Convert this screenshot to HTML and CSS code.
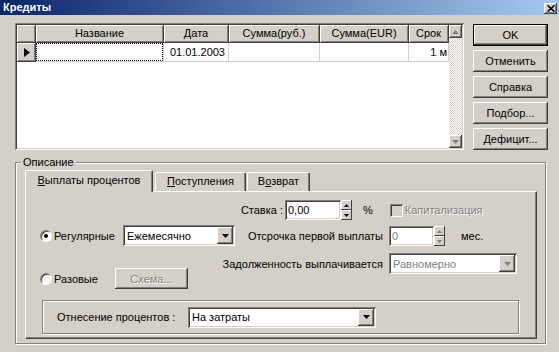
FILE: index.html
```html
<!DOCTYPE html>
<html lang="ru">
<head>
	<meta charset="UTF-8">
	<title>Кредиты</title>
	<link rel="stylesheet" href="styles.css">
</head>
<body>
	<div class="window">
		<div class="titlebar">
			<span class="title">Кредиты</span>
			<span class="close"><svg width="8" height="7" viewBox="0 0 8 7"><path d="M0.6 0.5L7.4 6.5M7.4 0.5L0.6 6.5" stroke="#000" stroke-width="1.6"/></svg></span>
		</div>
		<div class="client">
			<div class="top">
				<div class="grid">
					<div class="grid-body">
						<div class="row head">
							<div class="cell ind"></div>
							<div class="cell c-name">Название</div>
							<div class="cell c-date">Дата</div>
							<div class="cell c-rub">Сумма(руб.)</div>
							<div class="cell c-eur">Сумма(EUR)</div>
							<div class="cell c-term">Срок</div>
						</div>
						<div class="row data">
							<div class="cell ind"><svg width="6" height="9" viewBox="0 0 6 9"><polygon points="0,0 6,4.5 0,9"/></svg></div>
							<div class="cell c-name"><span class="focus"></span></div>
							<div class="cell c-date num">01.01.2003</div>
							<div class="cell c-rub"></div>
							<div class="cell c-eur"></div>
							<div class="cell c-term num">1 м</div>
						</div>
					</div>
					<div class="vscroll">
						<div class="sbtn"><svg width="7" height="4" viewBox="0 0 7 4"><polygon points="0,4 7,4 3.5,0" fill="#808080"/></svg></div>
						<div class="track"></div>
						<div class="sbtn"><svg width="7" height="4" viewBox="0 0 7 4"><polygon points="0,0 7,0 3.5,4" fill="#808080"/></svg></div>
					</div>
				</div>
				<div class="buttons">
					<button class="btn default">OK</button>
					<button class="btn">Отменить</button>
					<button class="btn">Справка</button>
					<button class="btn">Подбор...</button>
					<button class="btn">Дефицит...</button>
				</div>
			</div>

			<div class="group outer">
				<div class="caption">Описание</div>
				<div class="tabs">
					<div class="tab active t1"><u>В</u>ыплаты процентов</div>
					<div class="tab t2"><u>П</u>оступления</div>
					<div class="tab t3">В<u>о</u>зврат</div>
				</div>
				<div class="page">
					<div class="page-top">
						<div class="left">
							<div class="frow">
								<label class="opt w83"><span class="radio checked"></span>Регулярные</label>
								<div class="combo w112">
									<span class="combo-text">Ежемесячно</span>
									<span class="drop"><svg width="7" height="4" viewBox="0 0 7 4"><polygon points="0,0 7,0 3.5,4"/></svg></span>
								</div>
							</div>
							<div class="frow r-once">
								<label class="opt w75"><span class="radio"></span>Разовые</label>
								<button class="btn off scheme">Схема...</button>
							</div>
						</div>
						<div class="right">
							<div class="frow r-rate">
								<span class="lbl w63">Ставка :</span>
								<div class="edit rate">0,00</div>
								<div class="spin">
									<span class="spin-btn"><svg width="5" height="3" viewBox="0 0 5 3"><polygon points="0,3 5,3 2.5,0"/></svg></span>
									<span class="spin-btn"><svg width="5" height="3" viewBox="0 0 5 3"><polygon points="0,0 5,0 2.5,3"/></svg></span>
								</div>
								<span class="pct">%</span>
								<label class="chk-label off"><span class="chk"></span>Капитализация</label>
							</div>
							<div class="frow r-delay">
								<span class="lbl w163">Отсрочка первой выплаты</span>
								<div class="edit delay off">0</div>
								<div class="spin dis">
									<span class="spin-btn"><svg width="5" height="3" viewBox="0 0 5 3"><polygon points="0,3 5,3 2.5,0"/></svg></span>
									<span class="spin-btn"><svg width="5" height="3" viewBox="0 0 5 3"><polygon points="0,0 5,0 2.5,3"/></svg></span>
								</div>
								<span class="unit">мес.</span>
							</div>
							<div class="frow r-debt">
								<span class="lbl w163">Задолженность выплачивается</span>
								<div class="combo w128 off">
									<span class="combo-text">Равномерно</span>
									<span class="drop"><svg width="7" height="4" viewBox="0 0 7 4"><polygon points="0,0 7,0 3.5,4"/></svg></span>
								</div>
							</div>
						</div>
					</div>
					<div class="group inner">
						<span class="lbl w131 left-al">Отнесение процентов :</span>
						<div class="combo w188">
							<span class="combo-text">На затраты</span>
							<span class="drop"><svg width="7" height="4" viewBox="0 0 7 4"><polygon points="0,0 7,0 3.5,4"/></svg></span>
						</div>
					</div>
				</div>
			</div>
		</div>
	</div>
</body>
</html>
```

FILE: styles.css
```css
* {
	margin: 0;
	padding: 0;
	box-sizing: border-box;
}
body {
	font-family: "Liberation Sans", Arial, sans-serif;
	font-size: 11px;
	color: #000;
	background: #d4d0c8;
	width: 559px;
	height: 352px;
	overflow: hidden;
}
button {
	font: inherit;
	color: inherit;
	border: none;
	background: #d4d0c8;
}
.window {
	width: 559px;
	height: 352px;
}

/* заголовок окна */
.titlebar {
	height: 15px;
	background: linear-gradient(to right, #0a246a, #a6caf0);
	display: flex;
	align-items: center;
	justify-content: space-between;
	padding: 0 2px 0 3px;
}
.title {
	color: #fff;
	font-weight: bold;
	line-height: 13px;
}
.close {
	width: 13px;
	height: 11px;
	margin-top: 1px;
	background: #d4d0c8;
	display: flex;
	align-items: center;
	justify-content: center;
	box-shadow: inset -1px -1px #404040, inset 1px 1px #fff, inset -2px -2px #808080;
}

.client {
	padding: 8px 0 0 15px;
}
.top {
	display: flex;
	align-items: flex-start;
}

/* таблица */
.grid {
	width: 449px;
	height: 127px;
	padding: 2px;
	display: flex;
	background: #fff;
	box-shadow: inset 1px 1px #808080, inset -1px -1px #fff, inset 2px 2px #404040, inset -2px -2px #d4d0c8;
}
.grid-body {
	width: 432px;
	overflow: hidden;
}
.row {
	display: flex;
}
.cell {
	flex: none;
	white-space: nowrap;
	overflow: hidden;
}
.ind { width: 19px; }
.c-name { width: 128px; }
.c-date { width: 65px; }
.c-rub { width: 91px; }
.c-eur { width: 89px; }
.c-term { width: 40px; }
.head .cell {
	height: 18px;
	line-height: 17px;
	text-align: center;
	background: #d4d0c8;
	border-right: 1px solid #404040;
	border-bottom: 1px solid #404040;
	box-shadow: inset 1px 1px #fff, inset -1px -1px #808080;
}
.data .cell {
	height: 19px;
	line-height: 18px;
	background: #fff;
	border-right: 1px solid #d4d0c8;
	border-bottom: 1px solid #d4d0c8;
}
.data .ind {
	background: #d4d0c8;
	border-right-color: #404040;
	border-bottom-color: #404040;
	box-shadow: inset 1px 1px #fff, inset -1px -1px #808080;
	display: flex;
	align-items: center;
	padding-left: 7px;
}
.data .num {
	text-align: right;
	padding-right: 3px;
}
.data .c-term {
	padding-right: 1px;
}
.focus {
	display: block;
	height: 18px;
	border: 1px dotted #000;
}
.vscroll {
	width: 13px;
	display: flex;
	flex-direction: column;
}
.sbtn {
	height: 13px;
	background: #d4d0c8;
	display: flex;
	align-items: center;
	justify-content: center;
	box-shadow: inset -1px -1px #404040, inset 1px 1px #fff, inset -2px -2px #808080;
}
.track {
	flex: 1;
	background-image: conic-gradient(#d4d0c8 25%, #fff 0 50%, #d4d0c8 0 75%, #fff 0);
	background-size: 2px 2px;
}

/* кнопки */
.buttons {
	margin: 1px 0 0 9px;
	display: flex;
	flex-direction: column;
	gap: 4px;
}
.btn {
	width: 75px;
	height: 22px;
	text-align: center;
	box-shadow: inset -1px -1px #404040, inset 1px 1px #fff, inset -2px -2px #808080;
}
.btn.default {
	border: 1px solid #000;
}
.off, .btn.off {
	color: #808080;
	text-shadow: 1px 1px #fff;
}

/* группы */
.group {
	border: 1px solid #808080;
	box-shadow: inset 1px 1px #fff, 1px 1px #fff;
}
.outer {
	width: 531px;
	margin-top: 12px;
	padding: 0 8px 4px 9px;
}
.caption {
	display: table;
	margin: -7px 0 0 -4px;
	padding: 0 2px;
	line-height: 13px;
	background: #d4d0c8;
}

/* вкладки */
.tabs {
	display: flex;
	align-items: flex-end;
	height: 21px;
	margin-top: 1px;
}
.tab {
	height: 19px;
	line-height: 17px;
	text-align: center;
	background: #d4d0c8;
	border-top: 1px solid #fff;
	border-left: 1px solid #fff;
	border-right: 1px solid #404040;
	border-radius: 2px 2px 0 0;
	box-shadow: inset -1px 0 #808080;
}
.tab u {
	text-decoration-thickness: 1px;
	text-underline-offset: 1px;
}
.tab.active {
	height: 22px;
	margin-bottom: -1px;
	padding-top: 1px;
	position: relative;
}
.t1 { width: 128px; }
.t2 { width: 91px; margin-left: 2px; }
.t3 { width: 63px; margin-left: 1px; }
.page {
	width: 512px;
	height: 148px;
	border-top: 1px solid #fff;
	border-left: 1px solid #fff;
	border-right: 1px solid #404040;
	border-bottom: 1px solid #404040;
	box-shadow: inset -1px -1px #808080;
}
.page-top {
	display: grid;
	height: 97px;
}
.left, .right {
	grid-area: 1 / 1;
}
.left {
	margin-left: 14px;
	padding-top: 33px;
}
.right {
	margin-left: 194px;
	padding-top: 8px;
}
.frow {
	display: flex;
	align-items: center;
}
.r-once { margin-top: 22px; }
.r-delay { margin-top: 6px; }
.r-debt { margin-top: 7px; }
.lbl {
	flex: none;
	text-align: right;
	white-space: nowrap;
}
.left-al { text-align: left; }
.w63 { width: 63px; }
.w131 { width: 131px; }
.w163 { width: 163px; margin-right: 6px; }

/* поля */
.edit {
	height: 20px;
	line-height: 16px;
	padding: 2px 0 0 3px;
	background: #fff;
	box-shadow: inset 1px 1px #808080, inset -1px -1px #fff, inset 2px 2px #404040, inset -2px -2px #d4d0c8;
}
.rate {
	width: 56px;
	margin-left: 2px;
}
.delay {
	width: 45px;
}
.spin {
	width: 11px;
	height: 20px;
	display: flex;
	flex-direction: column;
}
.spin-btn {
	flex: 1;
	display: flex;
	align-items: center;
	justify-content: center;
	background: #d4d0c8;
	box-shadow: inset -1px -1px #404040, inset 1px 1px #fff;
}
.spin.dis polygon {
	fill: #808080;
}
.pct { margin-left: 11px; }
.unit { margin-left: 16px; }
.chk-label {
	display: flex;
	align-items: center;
	margin-left: 17px;
}
.chk {
	width: 13px;
	height: 13px;
	margin-right: 2px;
	background: #d4d0c8;
	box-shadow: inset 1px 1px #808080, inset -1px -1px #fff, inset 2px 2px #404040, inset -2px -2px #d4d0c8;
}

.combo {
	height: 21px;
	display: flex;
	align-items: center;
	justify-content: space-between;
	padding: 2px;
	background: #fff;
	box-shadow: inset 1px 1px #808080, inset -1px -1px #fff, inset 2px 2px #404040, inset -2px -2px #d4d0c8;
}
.combo-text {
	padding-left: 2px;
	white-space: nowrap;
}
.drop {
	width: 16px;
	height: 17px;
	display: flex;
	align-items: center;
	justify-content: center;
	background: #d4d0c8;
	box-shadow: inset -1px -1px #404040, inset 1px 1px #fff, inset -2px -2px #808080;
}
.combo.off .drop polygon {
	fill: #808080;
}
.w112 { width: 112px; }
.w128 { width: 128px; }
.w188 { width: 188px; }

/* переключатели */
.opt {
	flex: none;
	display: flex;
	align-items: center;
}
.w83 { width: 83px; }
.w75 { width: 75px; }
.radio {
	width: 12px;
	height: 12px;
	margin-right: 2px;
	border-radius: 50%;
	background: #fff;
	border: 1px solid;
	border-color: #808080 #fff #fff #808080;
	box-shadow: inset 1px 1px #404040;
	display: flex;
	align-items: center;
	justify-content: center;
}
.radio.checked::after {
	content: "";
	width: 4px;
	height: 4px;
	border-radius: 50%;
	background: #000;
}
.scheme {
	width: 73px;
	height: 21px;
}

.inner {
	width: 477px;
	height: 34px;
	margin: 11px 0 0 16px;
	padding-left: 14px;
	display: flex;
	align-items: center;
}
```
